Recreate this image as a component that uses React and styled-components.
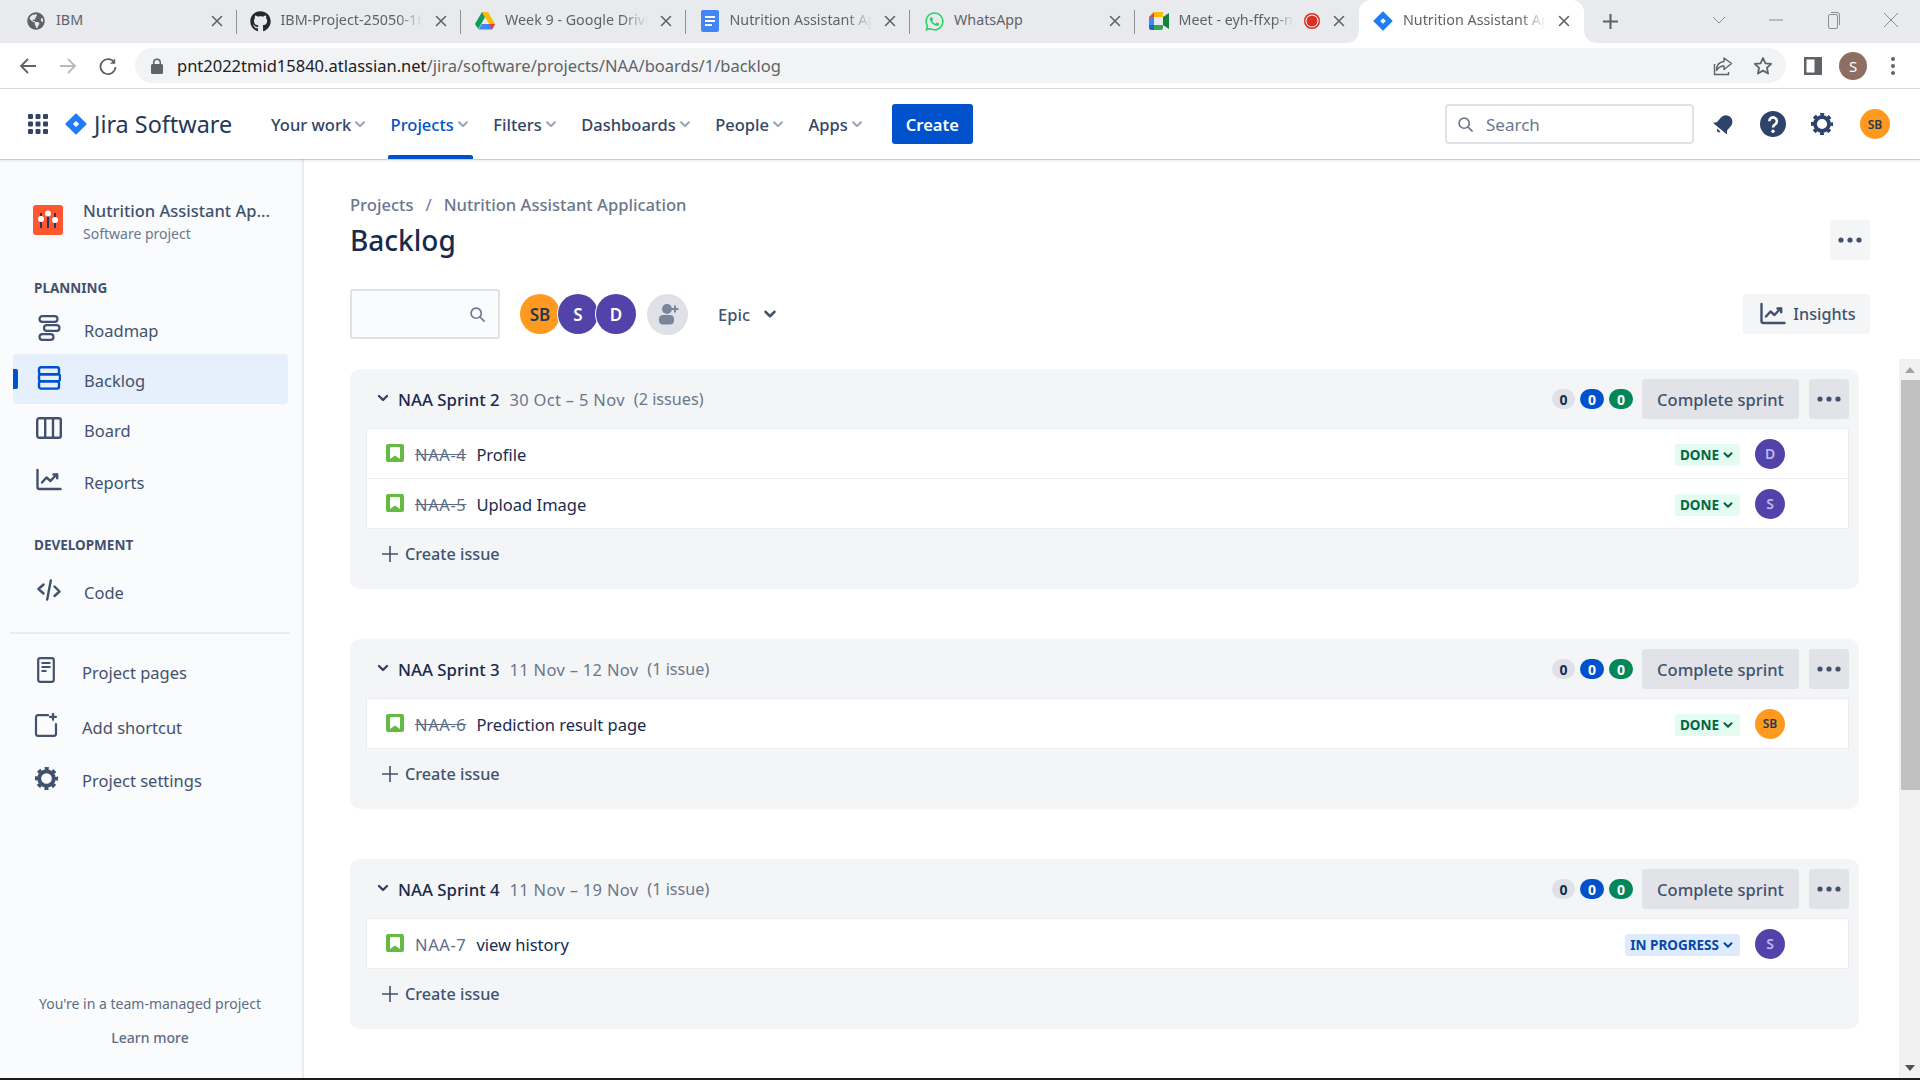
import React from "react";
import styled, { createGlobalStyle } from "styled-components";
import { FaGithub, FaWhatsapp, FaGlobeAmericas } from "react-icons/fa";

const FONT = `"Noto Sans", "Open Sans", "Liberation Sans", sans-serif`;

const Global = createGlobalStyle`
  html, body { margin: 0; padding: 0; height: 100%; overflow: hidden; background: #fff; }
  body { font-family: ${FONT}; color: #172b4d; }
  * { box-sizing: border-box; }
  svg { display: block; flex: none; }
`;

const Page = styled.div`
  width: 1920px; height: 1080px; display: flex; flex-direction: column; overflow: hidden; background: #fff;
`;

/* ---------- Browser chrome ---------- */
const TabStrip = styled.div`
  height: 43px; flex: none; display: flex; align-items: stretch; background: #e8eaed; padding-left: 12px;
`;
const Tab = styled.div`
  position: relative; width: 224.5px; flex: none; display: flex; align-items: center; padding: 0 12px 1px 14px; gap: 10px;
  background: ${p => (p.$active ? "#fff" : "transparent")};
  border-radius: ${p => (p.$active ? "12px 12px 0 0" : "0")};
  &::after {
    content: ""; position: absolute; right: 0; top: 10px; bottom: 9px; width: 1px;
    background: ${p => (p.$sep ? "#8f9297" : "transparent")};
  }
`;
const Corner = styled.span`
  position: absolute; bottom: 0; width: 12px; height: 12px;
  ${p => (p.$side === "left" ? "left: -12px;" : "right: -12px;")}
  background: radial-gradient(circle at ${p => (p.$side === "left" ? "0 0" : "100% 0")}, #e8eaed 11.5px, #fff 12px);
`;
const TabIcon = styled.span`
  width: 20px; height: 20px; flex: none; display: flex; align-items: center; justify-content: center;
`;
const TabTitle = styled.span`
  flex: 1; min-width: 0; font-size: 14.3px; color: #5f6368; white-space: nowrap; overflow: hidden; padding-bottom: 3px;
  -webkit-mask-image: linear-gradient(90deg, #000 82%, transparent 100%);
  mask-image: linear-gradient(90deg, #000 82%, transparent 100%);
`;
const TabPlain = styled(TabTitle)`
  -webkit-mask-image: none; mask-image: none;
`;
const RecDot = styled.span`
  width: 16px; height: 16px; flex: none; border-radius: 50%; background: #d93025;
  box-shadow: inset 0 0 0 1.5px #d93025, inset 0 0 0 2.5px #fff; margin-right: 1px;
`;
const NewTab = styled.div`
  width: 54px; display: flex; align-items: center; justify-content: center; color: #5f6368;
`;
const WindowControls = styled.div`
  margin-left: auto; display: flex; align-items: center; color: #8a8d91;
`;
const WindowBtn = styled.div`
  width: 57.5px; height: 43px; display: flex; align-items: center; justify-content: center; padding-bottom: 4px;
`;

const Toolbar = styled.div`
  height: 46px; flex: none; display: flex; align-items: flex-start; background: #fff; border-bottom: 1px solid #dadce0;
  padding: 5px 7px 0 8px;
`;
const ToolBtn = styled.div`
  width: 40px; height: 35px; flex: none; display: flex; align-items: center; justify-content: center;
  color: ${p => p.$dim ? "#b7babe" : "#5f6368"};
`;
const Address = styled.div`
  flex: 1; height: 35px; margin: 0 7px 0 7px; background: #f1f3f4; border-radius: 18px; display: flex; align-items: center;
  padding: 0 3px 0 16px;
`;
const Url = styled.div`
  flex: 1; margin-left: 14px; font-size: 16.5px; color: #5f6368; white-space: nowrap; padding-bottom: 1px;
  b { font-weight: 400; color: #202124; }
`;
const Profile = styled.div`
  width: 28px; height: 28px; border-radius: 50%; background: #8d6e63; color: #fff; font-size: 15px;
  display: flex; align-items: center; justify-content: center;
`;

/* ---------- Jira nav ---------- */
const JiraNav = styled.header`
  position: relative; z-index: 2; height: 70px; flex: none; display: flex; align-items: center; background: #fff;
  box-shadow: 0 1px 1px rgba(9,30,66,.18), 0 2px 4px rgba(9,30,66,.06);
  padding: 0 25px 0 28px;
`;
const Brand = styled.div`
  display: flex; align-items: center; margin-left: 17px; gap: 7px; width: 200px;
`;
const BrandName = styled.span`
  font-size: 23.4px; font-weight: 400; color: #253858; white-space: nowrap;
`;
const NavItems = styled.nav`
  display: flex; height: 70px; gap: 17.5px; margin-left: 3px;
`;
const NavItem = styled.div`
  position: relative; height: 70px; display: flex; align-items: center; gap: 2px; padding: 0 3px;
  font-size: 16.5px; font-weight: 500; white-space: nowrap;
  color: ${p => (p.$active ? "#0052cc" : "#344563")};
  &::after {
    content: ""; position: absolute; left: 0; right: 0; bottom: 0; height: 4px;
    background: ${p => (p.$active ? "#0052cc" : "transparent")};
    border-radius: 2px 2px 0 0;
  }
`;
const CreateBtn = styled.button`
  width: 81px; height: 40px; margin-left: 25px; border: 0; border-radius: 3px; background: #0052cc; color: #fff;
  font: 600 16.5px ${FONT};
`;
const NavRight = styled.div`
  margin-left: auto; display: flex; align-items: center; gap: 9px;
`;
const SearchBox = styled.div`
  width: 249px; height: 40px; margin-right: 1px; border: 2px solid #dfe1e6; border-radius: 4px; background: #fff;
  display: flex; align-items: center; gap: 12px; padding-left: 10px; color: #6b778c; font-size: 17px;
`;
const IconBtn = styled.div`
  width: 40px; height: 40px; display: flex; align-items: center; justify-content: center; color: #344563;
`;
const Avatar = styled.div`
  width: ${p => p.$size || 30}px; height: ${p => p.$size || 30}px; border-radius: 50%; flex: none;
  display: flex; align-items: center; justify-content: center;
  background: ${p => p.$bg || "#5243aa"}; color: ${p => p.$fg || "#fff"};
  font-size: ${p => p.$font || 13}px; font-weight: 600;
`;
const NavAvatarSlot = styled.div`
  width: 40px; margin-left: 4px; display: flex; justify-content: center;
`;

/* ---------- Body ---------- */
const Body = styled.div`
  flex: 1; min-height: 0; display: flex;
`;
const Sidebar = styled.aside`
  width: 304px; flex: none; display: flex; flex-direction: column; background: #fafbfc; border-right: 2px solid #ebecf0;
  padding-top: 46px;
`;
const ProjectHead = styled.div`
  display: flex; align-items: center; height: 30px; padding-left: 33px; gap: 20px;
`;
const ProjectLogo = styled.div`
  width: 30px; height: 30px; border-radius: 3px; background: #ff5630; display: flex; align-items: center; justify-content: center; flex: none;
`;
const ProjectText = styled.div`
  display: flex; flex-direction: column; white-space: nowrap; padding-top: 4px;
`;
const ProjectName = styled.div`
  font-size: 16.5px; font-weight: 500; color: #42526e; line-height: 22px;
`;
const ProjectSub = styled.div`
  font-size: 14px; color: #6b778c; line-height: 23px;
`;
const SectionLabel = styled.div`
  height: 20px; line-height: 20px; margin: ${p => p.$top}px 0 0 34px; font-size: 13.5px; font-weight: 700; color: #42526e;
`;
const SideRow = styled.div`
  position: relative; height: 50px; margin: ${p => p.$top || 0}px 14px 0 13px; border-radius: 4px; display: flex; align-items: center;
  padding: 2px 0 0 ${p => (p.$tight ? 20 : 23)}px; gap: ${p => (p.$tight ? 23 : 22)}px;
  font-size: 16.5px; color: #42526e;
  background: ${p => (p.$active ? "#e6effc" : "transparent")};
  &::before {
    content: ""; position: absolute; left: 0; top: 15px; height: 20px; width: 5px; border-radius: 0 2px 2px 0;
    background: ${p => (p.$active ? "#0052cc" : "transparent")};
  }
`;
const SideIcon = styled.span`
  width: 26px; height: 26px; flex: none; display: flex; align-items: center; justify-content: center; margin-top: -4px;
  color: ${p => (p.$active ? "#0052cc" : "#42526e")};
`;
const Divider = styled.div`
  height: 2px; margin: 16px 12px 0 10px; background: #ebecf0;
`;
const SideFoot = styled.div`
  margin-top: auto; padding-bottom: 30px; padding-right: 2px; text-align: center; color: #5e6c84; font-size: 14px;
`;
const FootLine = styled.div`
  height: 20px; line-height: 20px; margin-top: ${p => p.$top || 0}px; font-weight: ${p => p.$w || 400};
`;

const Main = styled.main`
  flex: 1; min-width: 0; display: flex; flex-direction: column;
`;
const MainHead = styled.div`
  padding: 35px 50px 0 46px;
`;
const Crumbs = styled.div`
  height: 20px; display: flex; align-items: center; gap: 12px; font-size: 16.6px; color: #6b778c; font-weight: 500; white-space: nowrap;
`;
const CrumbSep = styled.span` font-weight: 400; `;
const TitleRow = styled.div`
  height: 40px; margin-top: 6px; display: flex; align-items: center; justify-content: space-between;
`;
const Title = styled.h1`
  margin: 0; font-size: 28px; line-height: 40px; font-weight: 500; color: #172b4d;
`;
const GreyBtn = styled.div`
  height: 40px; width: ${p => (p.$w ? `${p.$w}px` : "auto")}; flex: none; border-radius: 3px; display: flex; align-items: center; justify-content: center;
  gap: ${p => p.$gap || 9}px; background: ${p => p.$bg || "#f4f5f7"}; color: #42526e; font-size: ${p => p.$font || 16.5}px; font-weight: 500; white-space: nowrap;
`;
const FilterRow = styled.div`
  height: 50px; margin-top: 29px; display: flex; align-items: center;
`;
const FilterInput = styled.div`
  width: 150px; height: 50px; border: 2px solid #dfe1e6; border-radius: 3px; background: #fafbfc; display: flex; align-items: center;
  justify-content: flex-end; padding-right: 12px; color: #6b778c;
`;
const AvatarStack = styled.div`
  display: flex; margin-left: 20px;
  & > * + * { margin-left: -2px; box-shadow: -1px 0 0 #fff; }
`;
const AddPeople = styled.div`
  width: 41px; height: 41px; margin-left: 11px; border-radius: 50%; background: #dfe1e6; display: flex; align-items: center; justify-content: center;
`;
const EpicFilter = styled.div`
  margin-left: 30px; display: flex; align-items: center; gap: 11px; font-size: 16.5px; font-weight: 500; color: #42526e;
`;
const InsightsWrap = styled.div`
  margin-left: auto;
`;
const InsightsIcon = styled.span`
  color: #42526e; margin-left: 3px;
`;

const SprintArea = styled.div`
  flex: 1; min-height: 0; margin-top: 20px; display: flex;
`;
const SprintList = styled.div`
  flex: 1; min-width: 0; padding: 10px 40px 0 46px; display: flex; flex-direction: column; gap: 50px; overflow: hidden;
`;
const Scrollbar = styled.div`
  width: 21px; flex: none; background: #f1f1f1; display: flex; flex-direction: column; align-items: flex-end;
`;
const ScrollArrow = styled.div`
  width: 21px; height: 21px; flex: none; display: flex; align-items: center; justify-content: center;
  margin-top: ${p => (p.$end ? "auto" : "0")};
`;
const ScrollThumb = styled.div`
  width: 19px; height: 410px; flex: none; background: #c1c1c1;
`;

const SprintCard = styled.section`
  flex: none; background: #f4f5f7; border-radius: 10px; padding: 0 10px 0 16px;
`;
const SprintHead = styled.div`
  height: 59px; display: flex; align-items: center; padding: 10px 0 9px;
`;
const SprintChevron = styled.span`
  width: 16px; margin-right: 7px; margin-left: 9px; margin-top: -3px; color: #344563;
`;
const SprintName = styled.span`
  font-size: 16.8px; font-weight: 500; color: #172b4d; white-space: nowrap;
`;
const SprintDates = styled.span`
  margin-left: 10px; font-size: 16.5px; letter-spacing: .3px; color: #6b778c; white-space: nowrap;
`;
const SprintCount = styled.span`
  margin-left: 9px; font-size: 16.2px; color: #6b778c; white-space: nowrap;
`;
const Badges = styled.div`
  margin-left: auto; display: flex; gap: 5px; margin-right: 9px;
`;
const Badge = styled.span`
  width: ${p => p.$w}px; height: 20px; border-radius: 10px; display: flex; align-items: center; justify-content: center;
  font-size: 14px; font-weight: 700; background: ${p => p.$bg}; color: ${p => p.$fg};
`;
const SprintActions = styled.div`
  display: flex; gap: 10px;
`;
const Rows = styled.div`
  background: #fff; border: 1px solid #ebecf0; border-bottom: 0;
`;
const IssueRow = styled.div`
  height: 50px; display: flex; align-items: center; padding: 2px 63px 0 19px; border-bottom: 1px solid #ebecf0;
`;
const StoryIcon = styled.span`
  width: 18px; height: 18px; border-radius: 2px; background: #65ba43; display: flex; align-items: center; justify-content: center; flex: none; margin-top: -4px;
`;
const IssueKey = styled.span`
  margin-left: 11px; font-size: 16.5px; letter-spacing: .6px; color: #5e6c84; white-space: nowrap;
  text-decoration: ${p => (p.$done ? "line-through" : "none")};
`;
const IssueSummary = styled.span`
  margin-left: 10px; font-size: 16.5px; color: #172b4d; white-space: nowrap;
`;
const Lozenge = styled.span`
  margin-left: auto; height: 22px; display: flex; align-items: center; gap: 2px; padding: 0 5px; border-radius: 3px;
  font-size: 13.5px; font-weight: 700;
  background: ${p => (p.$blue ? "#deebff" : "#e3fcef")}; color: ${p => (p.$blue ? "#0747a6" : "#006644")};
`;
const RowAvatar = styled.span`
  margin-left: 15px; margin-top: -2px; display: block;
`;
const CreateIssue = styled.div`
  height: 60px; padding: 0 0 10px 16px; display: flex; align-items: center; gap: 7px; font-size: 16.2px; font-weight: 500; color: #42526e;
`;
const BottomBar = styled.div`
  height: 2px; flex: none; background: #1b1b1b;
`;

/* ---------- Icons ---------- */
const Chevron = ({ size = 16, sw = 2 }) => (
  <svg width={size} height={size} viewBox="0 0 16 16" fill="none" stroke="currentColor" strokeWidth={sw} strokeLinecap="round" strokeLinejoin="round">
    <path d="M4 6l4 4 4-4" />
  </svg>
);
const NavChevron = () => (
  <svg width="14" height="14" viewBox="0 0 16 16" fill="none" stroke="#97a0af" strokeWidth="2.2" strokeLinecap="round" strokeLinejoin="round">
    <path d="M3.5 6l4.5 4.5L12.5 6" />
  </svg>
);
const X = () => (
  <svg width="16" height="16" viewBox="0 0 16 16" stroke="#5f6368" strokeWidth="1.6" strokeLinecap="round"><path d="M3.5 3.5l9 9M12.5 3.5l-9 9" /></svg>
);
const JiraDiamond = ({ size = 20 }) => (
  <svg width={size} height={size} viewBox="0 0 24 24">
    <path d="M12 1.5L22.5 12 12 22.5 1.5 12z" fill="#1f7cf5" stroke="#1f7cf5" strokeLinejoin="round" strokeWidth="2" />
    <path d="M12 8.6L15.4 12 12 15.4 8.6 12z" fill="#fff" />
  </svg>
);
const DriveIcon = () => (
  <svg width="20" height="18" viewBox="0 0 20 18">
    <path d="M7 0h6l7 12h-6z" fill="#fbbc04" />
    <path d="M7 0l3 5.5L3.2 17 0 12z" fill="#0f9d58" />
    <path d="M6.7 12H20l-3 5.5H3.5z" fill="#4285f4" />
    <path d="M7 12l3-6.2 3.6 6.2z" fill="#e8eaed" />
    <path d="M14 12h6l-3 5.5z" fill="#ea4335" />
  </svg>
);
const DocsIcon = () => (
  <svg width="18" height="22" viewBox="0 0 18 22">
    <rect width="18" height="22" rx="2" fill="#4285f4" />
    <path d="M4 7h10M4 11h10M4 15h7" stroke="#fff" strokeWidth="1.8" />
  </svg>
);
const MeetIcon = () => (
  <svg width="20" height="18" viewBox="0 0 20 18">
    <path d="M5 0h9v5H5z" fill="#fbbc04" />
    <path d="M5 0v5H0z" fill="#ea4335" />
    <path d="M0 5h5v8H0z" fill="#4285f4" />
    <path d="M0 13h5v5H2a2 2 0 0 1-2-2z" fill="#1967d2" />
    <path d="M5 13h9v3a2 2 0 0 1-2 2H5z" fill="#34a853" />
    <path d="M14 5v8l6 4V1z" fill="#188038" />
    <path d="M12 0a2 2 0 0 1 2 2v3h-3V0z" fill="#fbbc04" />
  </svg>
);
const GridIcon = () => (
  <svg width="20" height="20" viewBox="0 0 20 20" fill="#344563">
    {[0, 7.5, 15].map(y => [0, 7.5, 15].map(x => <rect key={`${x}-${y}`} x={x} y={y} width="5" height="5" rx="1" />))}
  </svg>
);
const SearchGlyph = ({ size = 18 }) => (
  <svg width={size} height={size} viewBox="0 0 18 18" fill="none" stroke="currentColor" strokeWidth="1.7" strokeLinecap="round">
    <circle cx="7.6" cy="7.6" r="5.4" /><path d="M11.6 11.6L16 16" />
  </svg>
);
const BellIcon = () => (
  <svg width="24" height="24" viewBox="0 0 24 24" fill="#2e4369">
    <g transform="rotate(40 12 12)">
      <path d="M12 2.5a6.5 6.5 0 0 0-6.5 6.5v6L3 18.2h18L18.5 15V9A6.5 6.5 0 0 0 12 2.5z" />
      <path d="M10 20h4a2 2 0 0 1-4 0z" />
    </g>
  </svg>
);
const HelpIcon = () => (
  <svg width="26" height="26" viewBox="0 0 26 26">
    <circle cx="13" cy="13" r="13" fill="#2e4369" />
    <path d="M9.3 10.2a3.8 3.8 0 1 1 5.8 3.2c-1.4.9-2.1 1.400-2.100 3" fill="none" stroke="#fff" strokeWidth="2.6" />
    <circle cx="13" cy="20.2" r="1.7" fill="#fff" />
  </svg>
);
const Gear = ({ size = 24, color = "#2e4369" }) => (
  <svg width={size} height={size} viewBox="0 0 24 24" fill="none" stroke={color}>
    <circle cx="12" cy="12" r="7" strokeWidth="3.8" />
    <circle cx="12" cy="12" r="9.6" strokeWidth="3" strokeDasharray="3.9 3.64" strokeDashoffset="2" />
  </svg>
);
const RoadmapIcon = () => (
  <svg width="24" height="26" viewBox="0 0 24 26" fill="none" stroke="currentColor" strokeWidth="2.2">
    <rect x="2.5" y="1.2" width="18" height="5.6" rx="2.8" />
    <rect x="7" y="10.2" width="15.5" height="5.6" rx="2.8" />
    <rect x="2.5" y="19.2" width="14" height="5.6" rx="2.8" />
  </svg>
);
const BacklogIcon = () => (
  <svg width="24" height="24" viewBox="0 0 24 24" fill="none" stroke="currentColor" strokeWidth="2.4">
    <rect x="2" y="1.2" width="20" height="7" rx="2" />
    <rect x="2" y="8.2" width="21" height="7" rx="2" />
    <rect x="2" y="15.2" width="20" height="7.4" rx="2" />
  </svg>
);
const BoardIcon = () => (
  <svg width="26" height="22" viewBox="0 0 26 22" fill="none" stroke="currentColor" strokeWidth="2.4">
    <rect x="1.2" y="1.2" width="23.6" height="19.6" rx="2" />
    <path d="M9.2 1v20M17 1v20" />
  </svg>
);
const ReportsIcon = () => (
  <svg width="26" height="24" viewBox="0 0 26 24" fill="none" stroke="currentColor" strokeWidth="2.4" strokeLinecap="round" strokeLinejoin="round">
    <path d="M1.5 2v17a2 2 0 0 0 2 2h21" />
    <path d="M6 14.5l4.5-5 4 3.5 6-6.5" />
    <path d="M17.5 6.500h3.700v3.700" />
  </svg>
);
const CodeIcon = () => (
  <svg width="24" height="22" viewBox="0 0 24 22" fill="none" stroke="currentColor" strokeWidth="2.4" strokeLinecap="round" strokeLinejoin="round">
    <path d="M6.5 5.5L1.5 10l5 4.500M17.500 7.500l5 5-5 4.500M13.800 1.500L10.200 20.500" />
  </svg>
);
const PagesIcon = () => (
  <svg width="18" height="26" viewBox="0 0 18 26" fill="none" stroke="currentColor" strokeWidth="2.2">
    <rect x="1.2" y="1.2" width="15.6" height="23.6" rx="2" />
    <path d="M4.500 6h9M4.500 10h9M4.500 14h5" />
  </svg>
);
const ShortcutIcon = () => (
  <svg width="24" height="24" viewBox="0 0 24 24" fill="none" stroke="currentColor" strokeWidth="2.2" strokeLinecap="round">
    <path d="M14 2.200H4a2 2 0 0 0-2 2v16.600a2 2 0 0 0 2 2h16a2 2 0 0 0 2-2V11" />
    <path d="M19 .8v6M16 3.800h6" />
  </svg>
);
const Dots = () => (
  <svg width="24" height="6" viewBox="0 0 24 6" fill="#42526e"><circle cx="3" cy="3" r="2.6" /><circle cx="12" cy="3" r="2.6" /><circle cx="21" cy="3" r="2.6" /></svg>
);
const StoryGlyph = () => (
  <svg width="10" height="12" viewBox="0 0 10 12" fill="#fff"><path d="M0 1a1 1 0 0 1 1-1h8a1 1 0 0 1 1 1v11L5 8.600 0 12z" /></svg>
);
const PlusIcon = ({ size = 16, sw = 1.6 }) => (
  <svg width={size} height={size} viewBox="0 0 16 16" stroke="currentColor" strokeWidth={sw}><path d="M8 0v16M0 8h16" /></svg>
);

const SIDE_TOP = [
  { label: "Roadmap", icon: <RoadmapIcon />, top: 6 },
  { label: "Backlog", icon: <BacklogIcon />, active: true },
  { label: "Board", icon: <BoardIcon /> },
  { label: "Reports", icon: <ReportsIcon />, top: 2 },
];
const NAV = ["Your work", "Projects", "Filters", "Dashboards", "People", "Apps"];

const TABS = [
  { title: "IBM", icon: <FaGlobeAmericas size={18} color="#5f6368" />, sep: true, plain: true },
  { title: "IBM-Project-25050-1659", icon: <FaGithub size={21} color="#24292f" />, sep: true },
  { title: "Week 9 - Google Drive", icon: <DriveIcon />, sep: true },
  { title: "Nutrition Assistant Application", icon: <DocsIcon />, sep: true },
  { title: "WhatsApp", icon: <FaWhatsapp size={21} color="#25d366" />, sep: true, plain: true },
  { title: "Meet - eyh-ffxp-nmq", icon: <MeetIcon />, rec: true },
  { title: "Nutrition Assistant Application", icon: <JiraDiamond />, active: true },
];

const SPRINTS = [
  {
    name: "NAA Sprint 2", dates: "30 Oct – 5 Nov", count: "(2 issues)",
    issues: [
      { key: "NAA-4", summary: "Profile", who: "D" },
      { key: "NAA-5", summary: "Upload Image", who: "S" },
    ],
  },
  {
    name: "NAA Sprint 3", dates: "11 Nov – 12 Nov", count: "(1 issue)",
    issues: [{ key: "NAA-6", summary: "Prediction result page", who: "SB" }],
  },
  {
    name: "NAA Sprint 4", dates: "11 Nov – 19 Nov", count: "(1 issue)",
    issues: [{ key: "NAA-7", summary: "view history", who: "S", progress: true }],
  },
];

const PersonAvatar = ({ who }) =>
  who === "SB" ? <Avatar $bg="#ff991f" $fg="#253858" $font={12}>SB</Avatar> : <Avatar $fg="#c0b6f2" $font={14}>{who}</Avatar>;

export default function App() {
  return (
    <Page>
      <Global />
      <TabStrip>
        {TABS.map((t, idx) => (
          <Tab key={idx} $active={t.active} $sep={t.sep}>
            {t.active && <Corner $side="left" />}
            <TabIcon>{t.icon}</TabIcon>
            {t.plain ? <TabPlain>{t.title}</TabPlain> : <TabTitle>{t.title}</TabTitle>}
            {t.rec && <RecDot />}
            <X />
            {t.active && <Corner $side="right" />}
          </Tab>
        ))}
        <NewTab><PlusIcon size={15} sw={2.2} /></NewTab>
        <WindowControls>
          <WindowBtn><svg width="14" height="8" viewBox="0 0 14 8" fill="none" stroke="currentColor"><path d="M1 1l6 6 6-6" /></svg></WindowBtn>
          <WindowBtn><svg width="14" height="2" viewBox="0 0 14 2" stroke="currentColor"><path d="M0 1h14" /></svg></WindowBtn>
          <WindowBtn><svg width="14" height="20" viewBox="0 0 14 20" fill="none" stroke="currentColor"><rect x="1.5" y="4.5" width="9" height="14" rx="1.5" /><path d="M4 2.5h6a2.5 2.5 0 0 1 2.5 2.5v10" /></svg></WindowBtn>
          <WindowBtn><svg width="16" height="16" viewBox="0 0 16 16" stroke="currentColor"><path d="M1 1l14 14M15 1L1 15" /></svg></WindowBtn>
        </WindowControls>
      </TabStrip>

      <Toolbar>
        <ToolBtn>
          <svg width="20" height="20" viewBox="0 0 20 20" fill="none" stroke="currentColor" strokeWidth="1.8"><path d="M18 10H3M10 3l-7 7 7 7" /></svg>
        </ToolBtn>
        <ToolBtn $dim>
          <svg width="20" height="20" viewBox="0 0 20 20" fill="none" stroke="currentColor" strokeWidth="1.8"><path d="M2 10h15M10 3l7 7-7 7" /></svg>
        </ToolBtn>
        <ToolBtn>
          <svg width="20" height="20" viewBox="0 0 20 20" fill="none" stroke="currentColor" strokeWidth="1.8"><path d="M16.6 7A7.5 7.5 0 1 0 17.5 11" /><path d="M17.2 2.5v5.2H12" fill="currentColor" stroke="none" /></svg>
        </ToolBtn>
        <Address>
          <svg width="12" height="16" viewBox="0 0 12 16" fill="#5f6368"><path d="M2 6V4.5a4 4 0 0 1 8 0V6h.5A1.5 1.5 0 0 1 12 7.5v7a1.5 1.5 0 0 1-1.5 1.5h-9A1.5 1.5 0 0 1 0 14.500v-7A1.500 1.500 0 0 1 1.500 6zm1.500 0h5V4.500a2.500 2.500 0 0 0-5 0z" /></svg>
          <Url><b>pnt2022tmid15840.atlassian.net</b>/jira/software/projects/NAA/boards/1/backlog</Url>
          <ToolBtn>
            <svg width="20" height="20" viewBox="0 0 20 20" fill="none" stroke="currentColor" strokeWidth="1.4"><path d="M1.500 8v10.500h14V16" /><path d="M11 2v3.500C6 6 3.500 9.500 3.500 14.500 6 10.500 8 10 11 10v3.500L18.500 7.500z" strokeLinejoin="round" /></svg>
          </ToolBtn>
          <ToolBtn>
            <svg width="20" height="20" viewBox="0 0 20 20" fill="none" stroke="currentColor" strokeWidth="1.8" strokeLinejoin="round"><path d="M10 2l2.400 5.300 5.800.6-4.300 3.900 1.200 5.700-5.100-2.900-5.100 2.900 1.200-5.700L1.800 7.900l5.800-.6z" /></svg>
          </ToolBtn>
        </Address>
        <ToolBtn>
          <svg width="18" height="18" viewBox="0 0 18 18"><path d="M0 0h18v18H0z" fill="#5f6368" /><path d="M2.500 2.500h8v13h-8z" fill="#fff" /></svg>
        </ToolBtn>
        <ToolBtn><Profile>S</Profile></ToolBtn>
        <ToolBtn>
          <svg width="6" height="20" viewBox="0 0 6 20" fill="#5f6368"><circle cx="3" cy="3" r="2" /><circle cx="3" cy="10" r="2" /><circle cx="3" cy="17" r="2" /></svg>
        </ToolBtn>
      </Toolbar>

      <JiraNav>
        <GridIcon />
        <Brand>
          <JiraDiamond size={22} />
          <BrandName>Jira Software</BrandName>
        </Brand>
        <NavItems>
          {NAV.map(n => (
            <NavItem key={n} $active={n === "Projects"}>{n}<NavChevron /></NavItem>
          ))}
        </NavItems>
        <CreateBtn>Create</CreateBtn>
        <NavRight>
          <SearchBox><SearchGlyph size={17} />Search</SearchBox>
          <IconBtn><BellIcon /></IconBtn>
          <IconBtn><HelpIcon /></IconBtn>
          <IconBtn><Gear /></IconBtn>
          <NavAvatarSlot><Avatar $bg="#ff991f" $fg="#253858" $font={12}>SB</Avatar></NavAvatarSlot>
        </NavRight>
      </JiraNav>

      <Body>
        <Sidebar>
          <ProjectHead>
            <ProjectLogo>
              <svg width="22" height="22" viewBox="0 0 22 22" stroke="#253858" strokeWidth="2" fill="#fff">
                <path d="M4 4v15M11 2v17M18 4v15" />
                <circle cx="4" cy="10" r="3" stroke="none" />
                <circle cx="11" cy="4.500" r="3" stroke="none" />
                <circle cx="18" cy="11" r="3" stroke="none" />
              </svg>
            </ProjectLogo>
            <ProjectText>
              <ProjectName>Nutrition Assistant Ap...</ProjectName>
              <ProjectSub>Software project</ProjectSub>
            </ProjectText>
          </ProjectHead>
          <SectionLabel $top={43}>PLANNING</SectionLabel>
          {SIDE_TOP.map(r => (
            <SideRow key={r.label} $active={r.active} $top={r.top}>
              <SideIcon $active={r.active}>{r.icon}</SideIcon>{r.label}
            </SideRow>
          ))}
          <SectionLabel $top={29}>DEVELOPMENT</SectionLabel>
          <SideRow $top={11}><SideIcon><CodeIcon /></SideIcon>Code</SideRow>
          <Divider />
          <SideRow $tight $top={12}><SideIcon><PagesIcon /></SideIcon>Project pages</SideRow>
          <SideRow $tight $top={5}><SideIcon><ShortcutIcon /></SideIcon>Add shortcut</SideRow>
          <SideRow $tight $top={3}><SideIcon><Gear size={25} color="#42526e" /></SideIcon>Project settings</SideRow>
          <SideFoot>
            <FootLine>You're in a team-managed project</FootLine>
            <FootLine $top={14} $w={500}>Learn more</FootLine>
          </SideFoot>
        </Sidebar>

        <Main>
          <MainHead>
            <Crumbs>Projects<CrumbSep>/</CrumbSep>Nutrition Assistant Application</Crumbs>
            <TitleRow>
              <Title>Backlog</Title>
              <GreyBtn $w={40}><Dots /></GreyBtn>
            </TitleRow>
            <FilterRow>
              <FilterInput><SearchGlyph size={17} /></FilterInput>
              <AvatarStack>
                <Avatar $size={40} $bg="#ff991f" $fg="#253858" $font={17}>SB</Avatar>
                <Avatar $size={40} $font={17}>S</Avatar>
                <Avatar $size={40} $font={17}>D</Avatar>
              </AvatarStack>
              <AddPeople>
                <svg width="22" height="22" viewBox="0 0 22 22" fill="#7a869a">
                  <circle cx="10" cy="6" r="5" />
                  <rect x="2" y="12" width="15" height="9.500" rx="4" />
                  <path d="M17 2.500h2v2.500h2.500v2H19v2.500h-2V7h-2.500V5H17z" />
                </svg>
              </AddPeople>
              <EpicFilter>Epic<Chevron size={18} sw={2.2} /></EpicFilter>
              <InsightsWrap>
                <GreyBtn $w={127} $gap={7} $font={16.2}><InsightsIcon><ReportsIcon /></InsightsIcon>Insights</GreyBtn>
              </InsightsWrap>
            </FilterRow>
          </MainHead>

          <SprintArea>
            <SprintList>
              {SPRINTS.map(s => (
                <SprintCard key={s.name}>
                  <SprintHead>
                    <SprintChevron><Chevron size={16} sw={2.4} /></SprintChevron>
                    <SprintName>{s.name}</SprintName>
                    <SprintDates>{s.dates}</SprintDates>
                    <SprintCount>{s.count}</SprintCount>
                    <Badges>
                      <Badge $w={23} $bg="#dfe1e6" $fg="#172b4d">0</Badge>
                      <Badge $w={24} $bg="#0052cc" $fg="#fff">0</Badge>
                      <Badge $w={24} $bg="#00875a" $fg="#fff">0</Badge>
                    </Badges>
                    <SprintActions>
                      <GreyBtn $w={157} $bg="#e2e3e8">Complete sprint</GreyBtn>
                      <GreyBtn $w={40} $bg="#e2e3e8"><Dots /></GreyBtn>
                    </SprintActions>
                  </SprintHead>
                  <Rows>
                    {s.issues.map(i => (
                      <IssueRow key={i.key}>
                        <StoryIcon><StoryGlyph /></StoryIcon>
                        <IssueKey $done={!i.progress}>{i.key}</IssueKey>
                        <IssueSummary>{i.summary}</IssueSummary>
                        <Lozenge $blue={i.progress}>{i.progress ? "IN PROGRESS" : "DONE"}<Chevron size={14} sw={2.4} /></Lozenge>
                        <RowAvatar><PersonAvatar who={i.who} /></RowAvatar>
                      </IssueRow>
                    ))}
                  </Rows>
                  <CreateIssue><PlusIcon />Create issue</CreateIssue>
                </SprintCard>
              ))}
            </SprintList>
            <Scrollbar>
              <ScrollArrow><svg width="10" height="6" viewBox="0 0 10 6" fill="#a3a3a3"><path d="M5 0l5 6H0z" /></svg></ScrollArrow>
              <ScrollThumb />
              <ScrollArrow $end><svg width="10" height="6" viewBox="0 0 10 6" fill="#505050"><path d="M5 6L0 0h10z" /></svg></ScrollArrow>
            </Scrollbar>
          </SprintArea>
        </Main>
      </Body>
      <BottomBar />
    </Page>
  );
}
